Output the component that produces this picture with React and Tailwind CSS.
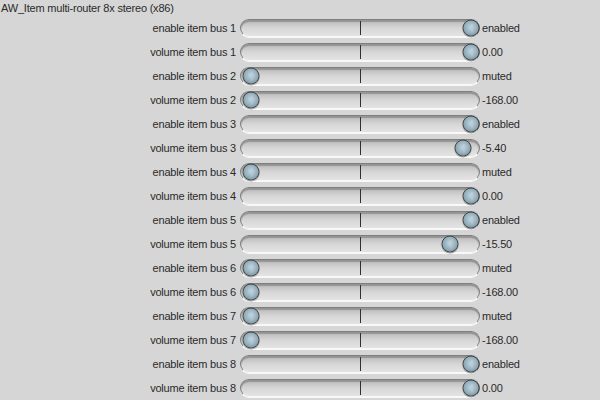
import React from "react";

const rows = [
  ["enable item bus 1", 230, "enabled"],
  ["volume item bus 1", 230, "0.00"],
  ["enable item bus 2", 10, "muted"],
  ["volume item bus 2", 10, "-168.00"],
  ["enable item bus 3", 230, "enabled"],
  ["volume item bus 3", 222, "-5.40"],
  ["enable item bus 4", 10, "muted"],
  ["volume item bus 4", 230, "0.00"],
  ["enable item bus 5", 230, "enabled"],
  ["volume item bus 5", 209, "-15.50"],
  ["enable item bus 6", 10, "muted"],
  ["volume item bus 6", 10, "-168.00"],
  ["enable item bus 7", 10, "muted"],
  ["volume item bus 7", 10, "-168.00"],
  ["enable item bus 8", 230, "enabled"],
  ["volume item bus 8", 230, "0.00"],
];

function Slider({ pos }) {
  return (
    <div className="relative w-[240px] h-[18px] rounded-full border border-[#7e7e7e] border-b-[#f8f8f8] bg-gradient-to-b from-[#b8b8b8] via-[#d6d6d6] to-[#e4e4e4] shadow-[inset_0_2px_1px_#959595,0_1px_0_#fafafa]">
      <div className="absolute left-[119px] top-[1px] bottom-[1px] w-px bg-[#303030]" />
      <div
        className="absolute top-1/2 w-[17px] h-[17px] -translate-y-1/2 -translate-x-1/2 rounded-full border border-[#454545] bg-[radial-gradient(circle_at_50%_45%,#c4d7e0_0%,#93aebc_55%,#66808e_100%)] shadow-[0_1px_1px_rgba(0,0,0,0.4)]"
        style={{ left: pos }}
      >
        <div className="absolute left-1/2 top-[3px] bottom-[3px] w-px bg-[#b8ccd6]" />
      </div>
    </div>
  );
}

export default function App() {
  return (
    <div
      className="w-[600px] h-[400px] bg-[#d6d6d6] text-[#2a2a2a] text-[11px] overflow-hidden tracking-[-0.2px]"
      style={{ fontFamily: '"Liberation Sans", Arial, sans-serif' }}
    >
      <div className="h-4 leading-4 pl-px">AW_Item multi-router 8x stereo (x86)</div>
      {rows.map(([label, pos, val], i) => (
        <div key={i} className="flex items-center h-6">
          <div className="w-[240px] pr-1 text-right">{label}</div>
          <Slider pos={pos} />
          <div className="pl-[2px]">{val}</div>
        </div>
      ))}
    </div>
  );
}
